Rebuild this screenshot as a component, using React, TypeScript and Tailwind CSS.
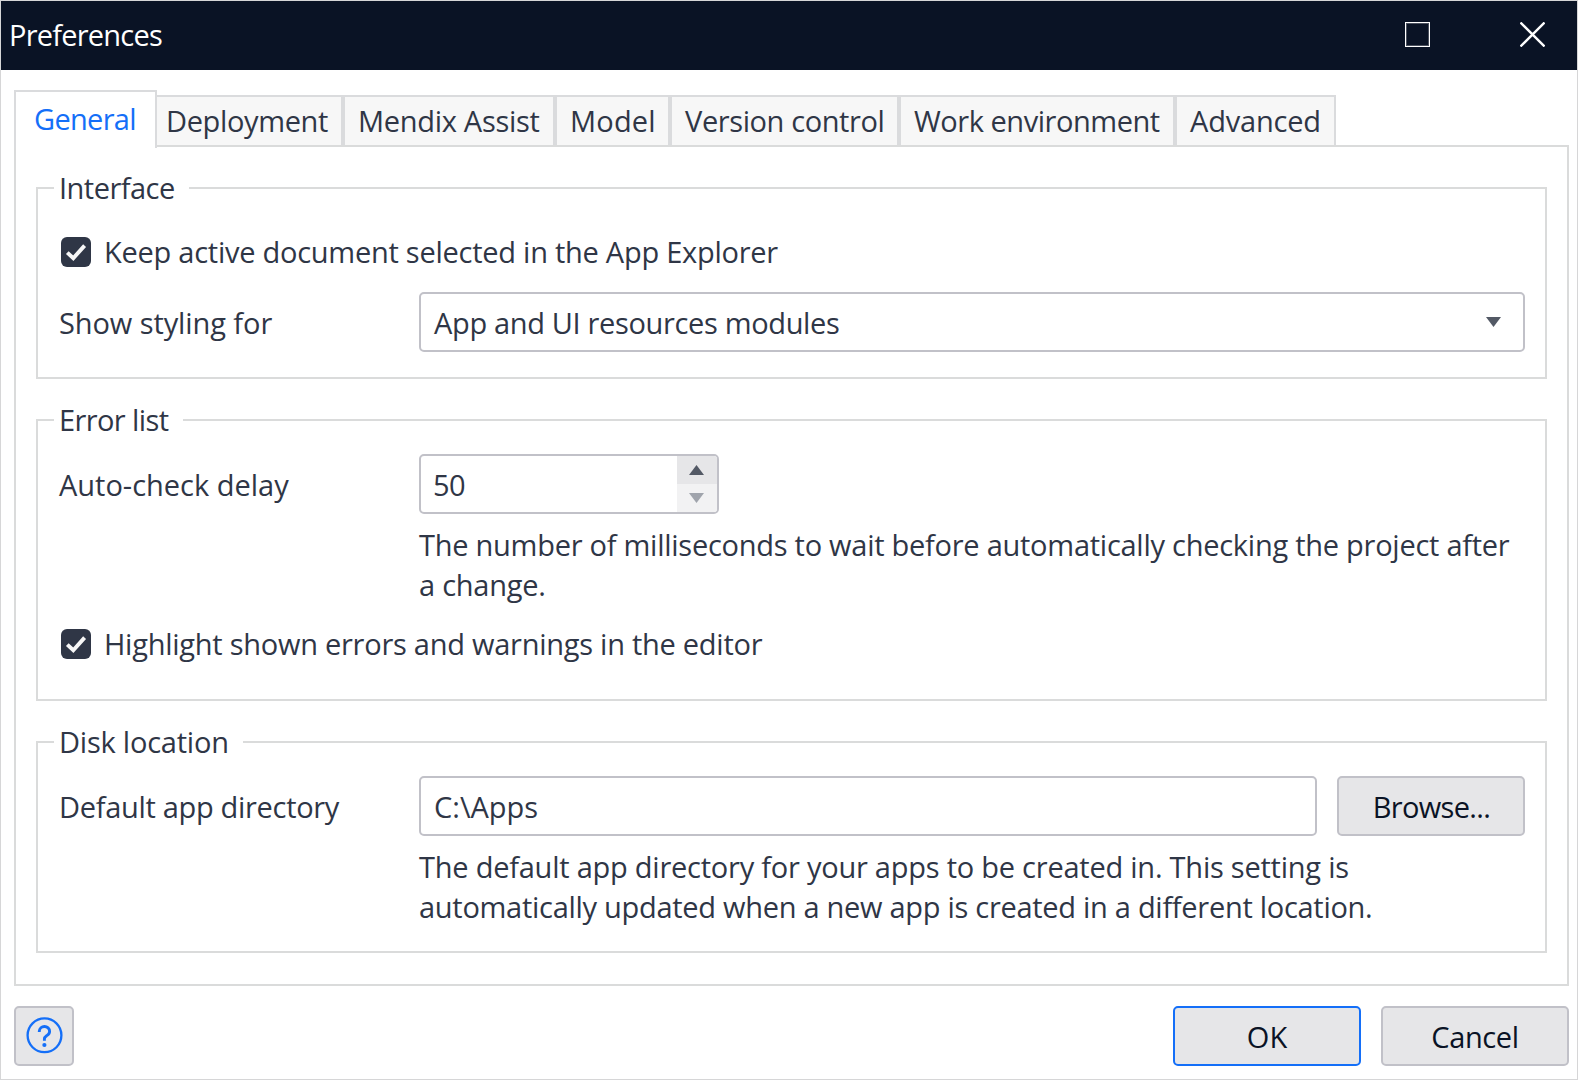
import React, { type ReactNode } from "react";

const TABS = [
  { label: "Deployment", className: "w-[186px] border-l-0 pl-[9px] tracking-[-0.364px]" },
  { label: "Mendix Assist", className: "w-[212px] pl-[13px] tracking-[-0.296px]" },
  { label: "Model", className: "w-[115px] pl-[13px] tracking-[0.2px]" },
  { label: "Version control", className: "w-[229px] pl-[13px] tracking-[-0.399px]" },
  { label: "Work environment", className: "w-[276px] pl-[13px] tracking-[-0.46px]" },
  { label: "Advanced", className: "w-[161px] pl-[13px] tracking-[-0.2px]" },
];

function TitleBar() {
  return (
    <header className="flex h-[69px] shrink-0 items-start bg-[#0a1325] pl-[8px] text-white">
      <h1 className="flex-1 pt-[14px] tracking-[-0.772px]">Preferences</h1>
      <button
        aria-label="Maximize"
        className="mt-[21px] mr-[90px] h-[25px] w-[25px] border border-white shadow-[inset_0_0_0_1px_#4a505d]"
      />
      <button aria-label="Close" className="mt-[21px] mr-[32px]">
        <svg width="25" height="25" viewBox="0 0 25 25" fill="none" stroke="currentColor" strokeWidth="2.3">
          <path d="M0.5 0.5 24.5 24.5M24.5 0.5 0.5 24.5" />
        </svg>
      </button>
    </header>
  );
}

function TabStrip() {
  return (
    <nav className="relative z-10 flex h-[55px] items-start">
      <button className="h-[58px] w-[143px] border-2 border-b-0 border-[#dadbdd] bg-white pt-[7px] pl-[18px] text-left align-top tracking-[-0.7px] text-[#146ff8]">
        <span className="block h-[49px]">General</span>
      </button>
      {TABS.map((tab) => (
        <button
          key={tab.label}
          className={`mt-[5px] h-[50px] border-2 border-b-0 border-[#dadbdd] bg-[#f7f7f7] pt-[4px] text-left ${tab.className}`}
        >
          <span className="block h-[44px] whitespace-nowrap">{tab.label}</span>
        </button>
      ))}
    </nav>
  );
}

function Group({ title, legendClass, className, children }: { title: string; legendClass: string; className: string; children: ReactNode }) {
  return (
    <fieldset className={`min-w-0 border-2 border-[#dadbdb] pr-[20px] pl-[16px] ${className}`}>
      <legend className={`h-[40px] pl-[5px] whitespace-nowrap ${legendClass}`}>{title}</legend>
      {children}
    </fieldset>
  );
}

function Check({ label, className }: { label: string; className: string }) {
  return (
    <label className={`flex h-[40px] items-center gap-[13px] pl-[7px] whitespace-nowrap ${className}`}>
      <span className="flex h-[30px] w-[30px] items-center justify-center rounded-[6px] bg-[#2f3646]">
        <svg width="30" height="30" viewBox="0 0 30 30" fill="none" stroke="#f7f7f7" strokeWidth="3.9">
          <path d="M6.3 15.6 12.3 21.2 23.6 8.6" />
        </svg>
      </span>
      {label}
    </label>
  );
}

function Row({ label, labelClass, className, children }: { label: string; labelClass: string; className: string; children: ReactNode }) {
  return (
    <div className={`flex items-start ${className}`}>
      <span className={`w-[365px] shrink-0 pt-[11px] pl-[5px] whitespace-nowrap ${labelClass}`}>{label}</span>
      {children}
    </div>
  );
}

function Triangle({ up, color }: { up?: boolean; color: string }) {
  return (
    <svg width="15" height="10" viewBox="0 0 15 10" fill={color}>
      <path d={up ? "M0 10 7.5 0 15 10z" : "M0 0h15L7.5 10z"} />
    </svg>
  );
}

function Button({ children, className }: { children: ReactNode; className: string }) {
  return (
    <button className={`h-[60px] shrink-0 rounded-[5px] border-2 bg-[#e6e6e8] pt-[2px] text-center text-[#0a1325] ${className}`}>
      {children}
    </button>
  );
}

export default function App() {
  return (
    <div className="flex h-[1080px] w-[1578px] flex-col overflow-hidden border border-[#d6d6d7] bg-white font-['Open_Sans',sans-serif] text-[29px] leading-[40px] text-[#2f3646]">
      <TitleBar />
      <main className="pt-[20px] pr-[8px] pl-[13px]">
        <TabStrip />
        <section className="h-[841px] border-2 border-[#dadbdb] px-[20px] pt-[21px]">
          <Group title="Interface" legendClass="w-[135px] tracking-[-0.515px]" className="h-[211px]">
            <Check label="Keep active document selected in the App Explorer" className="mt-[24px] tracking-[-0.255px]" />
            <Row label="Show styling for" labelClass="tracking-[-0.089px]" className="mt-[20px]">
              <div className="flex h-[60px] flex-1 items-start justify-between rounded-[5px] border-2 border-[#c1c1c8] pl-[13px] pr-[22px] tracking-[-0.344px]">
                <span className="pt-[9px]">App and UI resources modules</span>
                <span className="pt-[23px] leading-none">
                  <Triangle color="#535965" />
                </span>
              </div>
            </Row>
          </Group>

          <Group title="Error list" legendClass="w-[129px] tracking-[-0.6px]" className="mt-[21px] h-[301px]">
            <Row label="Auto-check delay" labelClass="tracking-[-0.01px]" className="mt-[14px]">
              <div className="flex h-[60px] w-[300px] overflow-hidden rounded-[5px] border-2 border-[#c1c1c8] pl-[12px]">
                <span className="flex-1 pt-[9px] tracking-[-0.6px]">50</span>
                <div className="flex w-[40px] flex-col">
                  <span className="h-[28px] bg-[#e6e6e8] pt-[9px] pl-[12px]">
                    <Triangle up color="#535965" />
                  </span>
                  <span className="h-[28px] bg-[#f2f2f3] pt-[9px] pl-[12px]">
                    <Triangle color="#a0a4ac" />
                  </span>
                </div>
              </div>
            </Row>
            <p className="mt-[11px] pl-[365px] tracking-[-0.26px] whitespace-nowrap">
              The number of milliseconds to wait before automatically checking the project after
              <br />a change.
            </p>
            <Check label="Highlight shown errors and warnings in the editor" className="mt-[19px] tracking-[-0.258px]" />
          </Group>

          <Group title="Disk location" legendClass="w-[189px] tracking-[-0.22px]" className="mt-[21px] h-[231px]">
            <Row label="Default app directory" labelClass="tracking-[-0.31px]" className="mt-[14px]">
              <div className="h-[60px] flex-1 rounded-[5px] border-2 border-[#c1c1c8] pt-[9px] pl-[13px]">C:\Apps</div>
              <Button className="ml-[20px] w-[188px] border-[#c1c1c8] pl-[1px] tracking-[-0.668px]">Browse...</Button>
            </Row>
            <p className="mt-[11px] pl-[365px] whitespace-nowrap">
              <span className="tracking-[-0.235px]">The default app directory for your apps to be created in. This setting is</span>
              <br />
              <span className="tracking-[-0.285px]">automatically updated when a new app is created in a different location.</span>
            </p>
          </Group>
        </section>

        <footer className="mt-[20px] flex items-start">
          <button
            aria-label="Help"
            className="flex h-[60px] w-[60px] items-center justify-center rounded-[5px] border-2 border-[#c1c1c8] bg-[#e6e6e8] text-[#146ff8]"
          >
            <svg width="40" height="40" viewBox="0 0 40 40" fill="none" stroke="currentColor">
              <circle cx="20.5" cy="19.3" r="16.9" strokeWidth="2.3" />
              <path d="M15.3 16V15a5.1 4.9 0 0 1 5.1-4.5 5.1 4.9 0 0 1 5.2 4.9c0 2.4-1.5 3.3-3 4.3-1.4 1-2.2 1.8-2.2 3.2v1.8" strokeWidth="2.9" />
              <circle cx="20.4" cy="29" r="2.1" fill="currentColor" stroke="none" />
            </svg>
          </button>
          <Button className="ml-auto w-[188px] border-[#146ff8]">OK</Button>
          <Button className="ml-[20px] w-[188px] border-[#c1c1c8] tracking-[-0.4px]">Cancel</Button>
        </footer>
      </main>
    </div>
  );
}
